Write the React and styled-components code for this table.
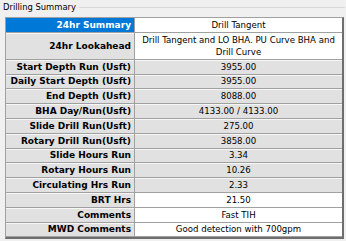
import React from "react";
import styled, { createGlobalStyle } from "styled-components";

const Global = createGlobalStyle`
  html, body { margin: 0; padding: 0; }
  body {
    background: #f0f0f0;
    width: 346px;
    height: 241px;
    overflow: hidden;
    font-family: "DejaVu Sans", Verdana, sans-serif;
  }
`;

const Group = styled.div`
  width: 346px;
  height: 241px;
  box-sizing: border-box;
  display: flex;
  flex-direction: column;
`;

const Header = styled.div`
  display: flex;
  align-items: center;
  height: 14px;
  padding-left: 3px;
  padding-right: 1px;
`;

const Title = styled.span`
  font-size: 8.4px;
  color: #000;
  white-space: nowrap;
`;

const Rule = styled.div`
  flex: 1;
  height: 1px;
  margin-left: 3px;
  background: #d9d9d9;
`;

const Table = styled.div`
  margin: 3px 0 0 5px;
  width: 339px;
  box-sizing: border-box;
  border-top: 1px solid #a0a0a0;
  border-left: 1px solid #a0a0a0;
  border-right: 2px solid #6e6e6e;
  border-bottom: 2px solid #6e6e6e;
  display: grid;
  grid-template-columns: 129px 1fr;
  background: #f0f0f0;
`;

const Label = styled.div`
  box-sizing: border-box;
  height: ${(p) => (p.$tall ? "27px" : "14.8px")};
  display: flex;
  align-items: center;
  justify-content: flex-end;
  padding-right: 3px;
  font-size: 9px;
  font-weight: bold;
  white-space: nowrap;
  color: ${(p) => (p.$active ? "#ffffff" : "#000000")};
  background: ${(p) => (p.$active ? "#0078d7" : "#e1e1e1")};
  border-right: 1px solid #a0a0a0;
  border-bottom: 1px solid #a0a0a0;
  box-shadow: ${(p) => (p.$active ? "none" : "inset 0 1px 0 #f7f7f7")};
`;

const Value = styled.div`
  box-sizing: border-box;
  height: ${(p) => (p.$tall ? "27px" : "14.8px")};
  display: flex;
  align-items: ${(p) => (p.$tall ? "flex-start" : "center")};
  justify-content: center;
  text-align: center;
  padding: ${(p) => (p.$tall ? "1px 0 0" : "0 2px")};
  font-size: 8.6px;
  line-height: 12px;
  color: #000;
  background: ${(p) => (p.$editable ? "#ffffff" : "#e1e1e1")};
  border-bottom: 1px solid #a0a0a0;
  box-shadow: ${(p) => (p.$editable ? "none" : "inset 0 1px 0 #f7f7f7")};
  overflow: hidden;
`;

const rows = [
  { label: "24hr Summary", value: "Drill Tangent", editable: true, active: true },
  {
    label: "24hr Lookahead",
    value: "Drill Tangent and LO BHA. PU Curve BHA and Drill Curve",
    editable: true,
    tall: true,
  },
  { label: "Start Depth Run (Usft)", value: "3955.00" },
  { label: "Daily Start Depth (Usft)", value: "3955.00" },
  { label: "End Depth (Usft)", value: "8088.00" },
  { label: "BHA Day/Run(Usft)", value: "4133.00 / 4133.00" },
  { label: "Slide Drill Run(Usft)", value: "275.00" },
  { label: "Rotary Drill Run(Usft)", value: "3858.00" },
  { label: "Slide Hours Run", value: "3.34" },
  { label: "Rotary Hours Run", value: "10.26" },
  { label: "Circulating Hrs Run", value: "2.33" },
  { label: "BRT Hrs", value: "21.50", editable: true },
  { label: "Comments", value: "Fast TIH", editable: true },
  { label: "MWD Comments", value: "Good detection with 700gpm", editable: true },
];

export default function App() {
  return (
    <>
      <Global />
      <Group>
        <Header>
          <Title>Drilling Summary</Title>
          <Rule />
        </Header>
        <Table>
          {rows.map((r) => (
            <React.Fragment key={r.label}>
              <Label $active={r.active} $tall={r.tall}>
                {r.label}
              </Label>
              <Value $editable={r.editable} $tall={r.tall}>
                {r.value}
              </Value>
            </React.Fragment>
          ))}
        </Table>
      </Group>
    </>
  );
}
